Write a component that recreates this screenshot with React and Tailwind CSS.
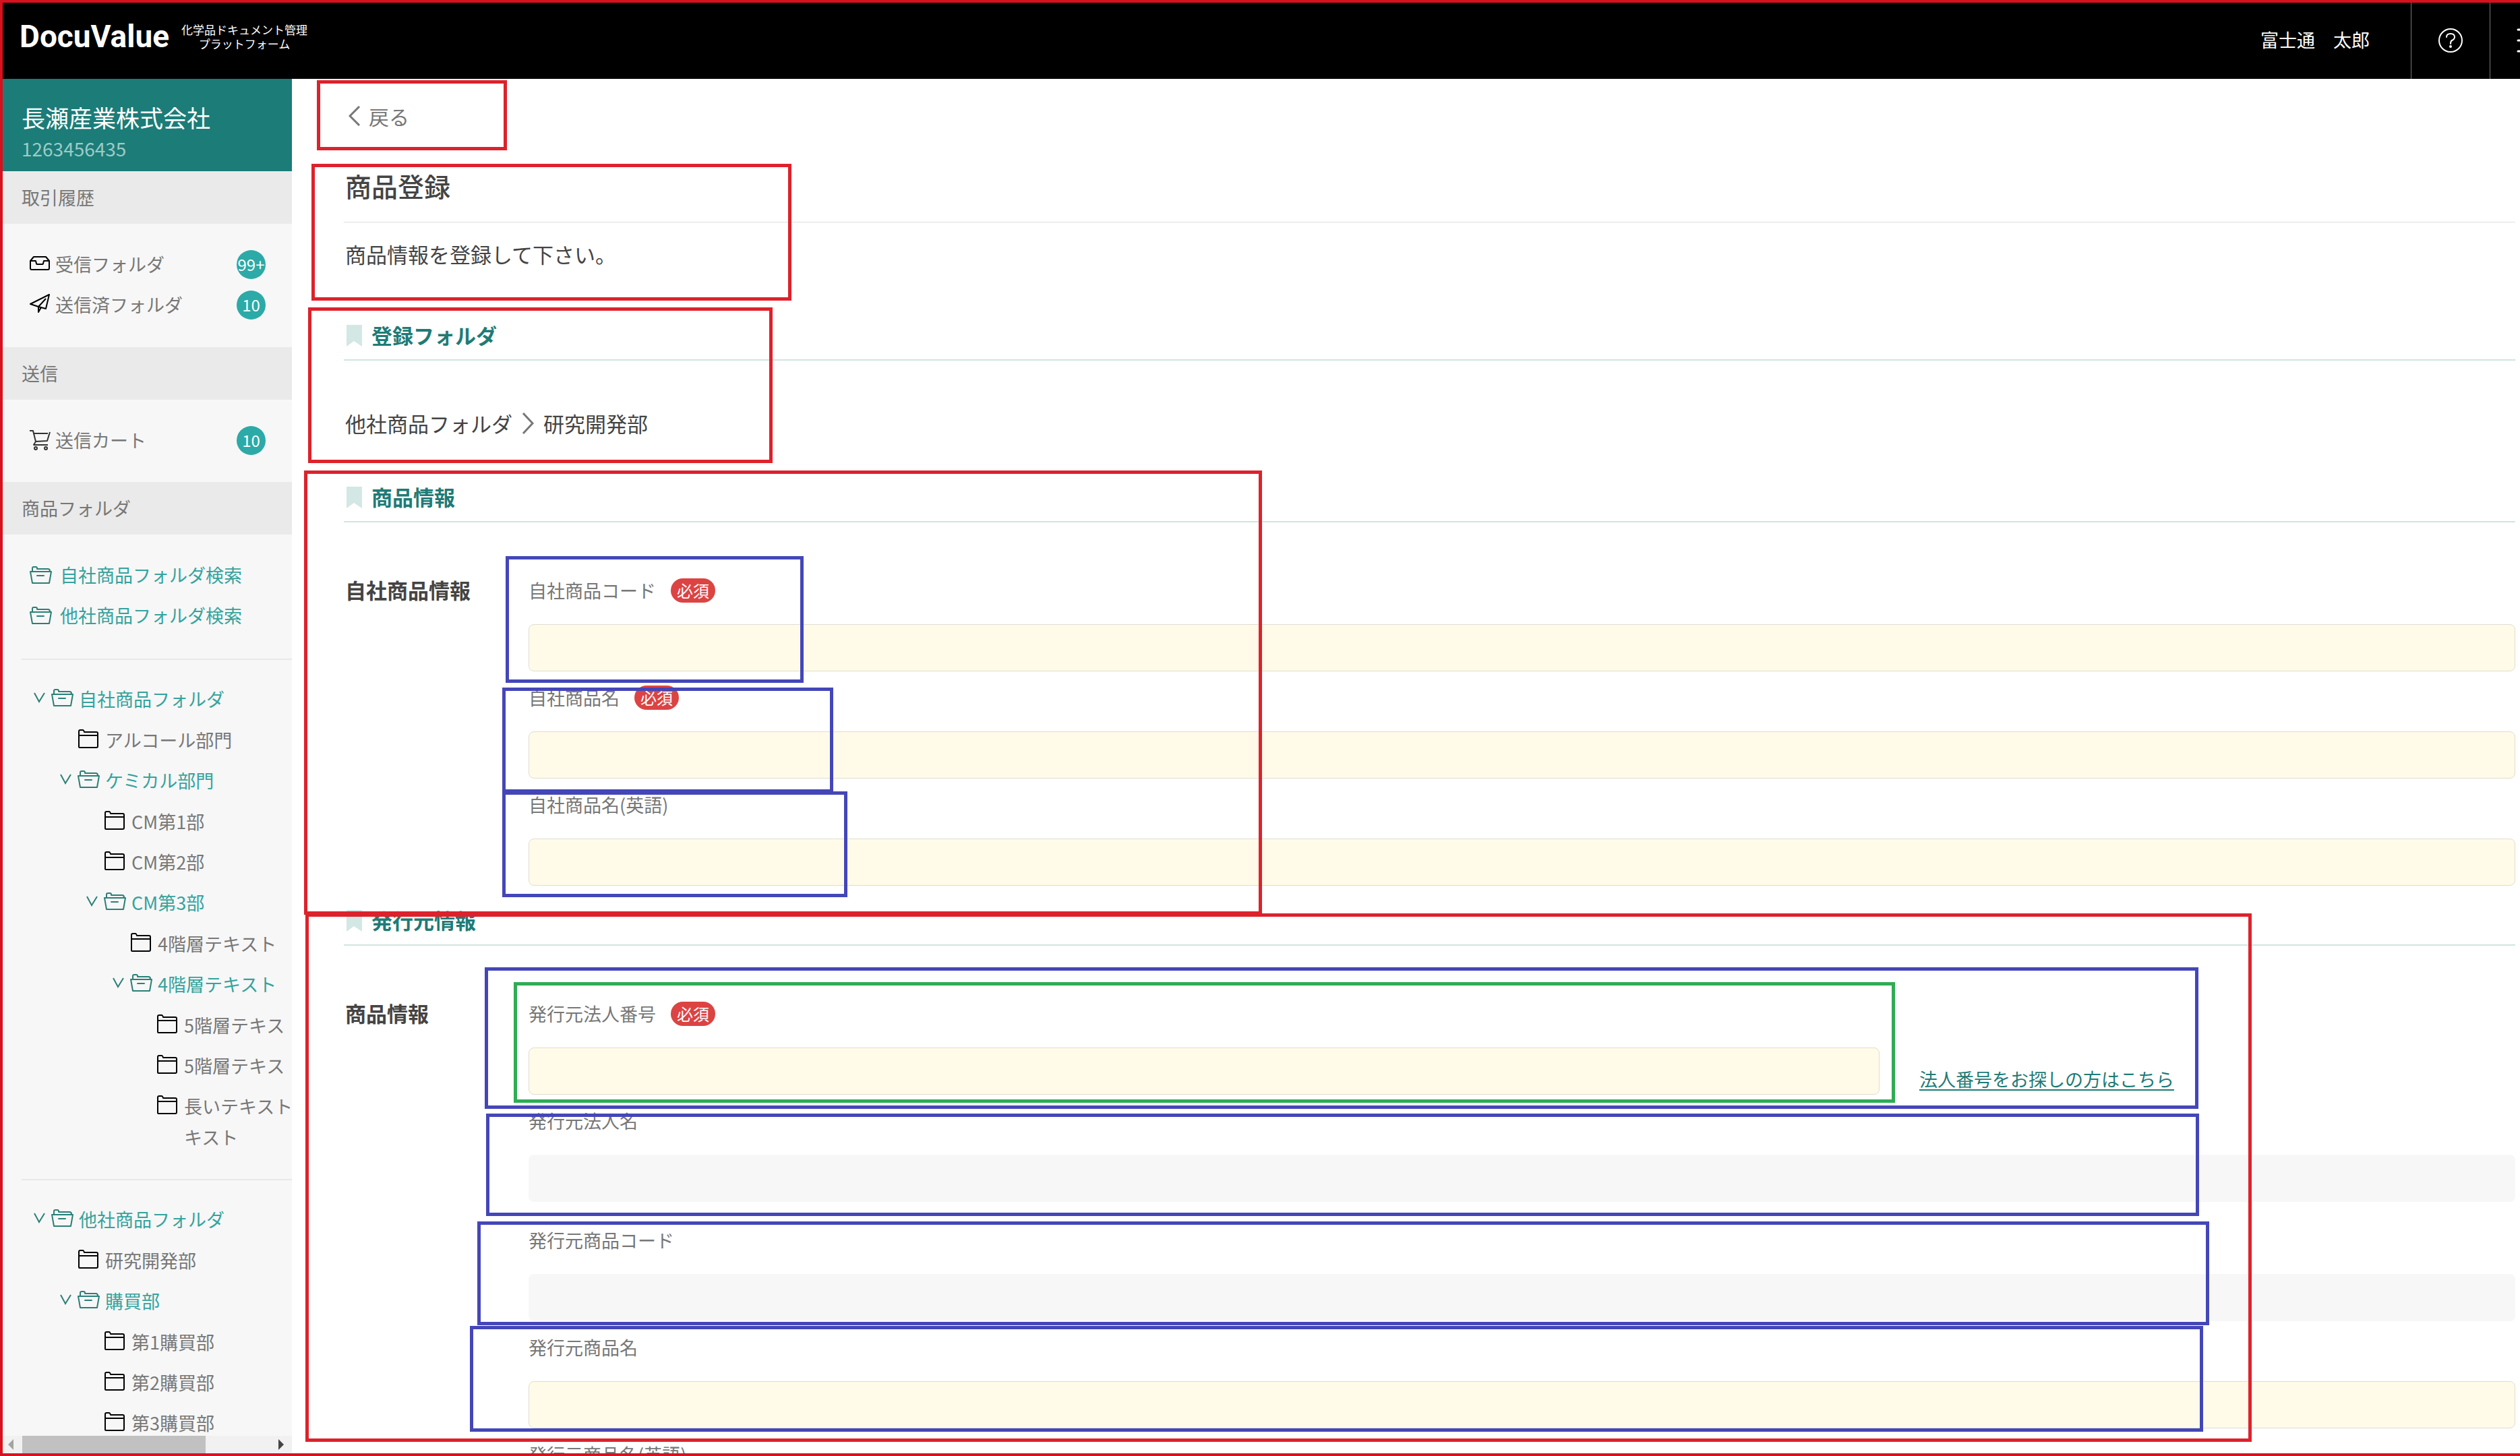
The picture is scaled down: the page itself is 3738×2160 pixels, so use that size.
import React from "react";

function OpenFolder() {
  return (
    <svg className="w-[33px] h-[29px] shrink-0" viewBox="0 0 33 29" fill="none" stroke="#2a8076" strokeWidth="2" strokeLinejoin="round" strokeLinecap="round" aria-hidden="true">
      <path d="M4 9 V4 Q4 2 6 2 H9 Q11 2 11 4 V5 H27 Q30 5 30 8 M1 9 H32 L29 26 H4 Z M11 15 H21" />
    </svg>
  );
}

function ClosedFolder() {
  return (
    <svg className="w-[30px] h-[29px] shrink-0" viewBox="0 0 30 29" fill="none" stroke="#000" strokeWidth="2" strokeLinejoin="round" aria-hidden="true">
      <path d="M1 26 V3 Q1 1 3 1 H7 Q8 1 9 4 H27 Q29 4 29 6 V25 Q29 27 27 27 H2 Q1 27 1 26 Z M1 9 H29" />
    </svg>
  );
}

function Inbox() {
  return (
    <svg className="w-[30px] h-[26px] shrink-0" viewBox="0 0 30 26" fill="none" stroke="#000" strokeWidth="2" strokeLinejoin="round" aria-hidden="true">
      <path d="M1 8 L6 2 H24 L29 8 V19 Q29 21 27 21 H3 Q1 21 1 19 Z M1 8 H9 L10 12 Q10 13 12 13 H18 Q20 13 20 12 L21 8 H29" />
    </svg>
  );
}

function Plane() {
  return (
    <svg className="w-[30px] h-[32px] shrink-0" viewBox="0 0 30 32" fill="none" stroke="#000" strokeWidth="2" strokeLinejoin="round" aria-hidden="true">
      <path d="M29 1 L1 15 L13 19 L24 22 Z M24 7 L13 19 V27 L17 20" />
    </svg>
  );
}

function Cart() {
  return (
    <svg className="w-[32px] h-[31px] shrink-0" viewBox="0 0 32 31" fill="none" stroke="#333" strokeWidth="2" strokeLinejoin="round" aria-hidden="true">
      <path d="M0 1 H5 L9 17 L26 16 L30 3 M6 5 H27 M9 17 L6 22 H27" />
      <circle cx="9" cy="27" r="2" />
      <circle cx="24" cy="27" r="2" />
    </svg>
  );
}

function Chevron({ className, d, box, color, width }) {
  return (
    <svg className={className} viewBox={box} fill="none" stroke={color} strokeWidth={width} aria-hidden="true">
      <path d={d} />
    </svg>
  );
}

function SectionBar({ children }) {
  return <h2 className="h-[78px] bg-[#eaeaea] pl-7 flex items-center text-[27px] leading-[46px] text-[#777]">{children}</h2>;
}

function NavItem({ icon, label, count }) {
  return (
    <li>
      <a href="#" className="flex h-[60px] items-center pl-10 pr-[39px]">
        <span className="w-[38px]">{icon}</span>
        <span className="flex-1 text-[#777]">{label}</span>
        <span className="flex size-[43px] items-center justify-center rounded-full bg-[#2baaa8] text-[24px] leading-none text-white">{count}</span>
      </a>
    </li>
  );
}

function SearchItem({ label }) {
  return (
    <li>
      <a href="#" className="flex h-[60px] items-center gap-3 pl-10 text-[#35a39d]">
        <OpenFolder />
        {label}
      </a>
    </li>
  );
}

const ownTree = {
  label: "自社商品フォルダ",
  children: [
    { label: "アルコール部門" },
    {
      label: "ケミカル部門",
      children: [
        { label: "CM第1部" },
        { label: "CM第2部" },
        {
          label: "CM第3部",
          children: [
            { label: "4階層テキスト" },
            {
              label: "4階層テキスト",
              children: [{ label: "5階層テキス" }, { label: "5階層テキス" }, { label: "長いテキスト", more: "キスト" }],
            },
          ],
        },
      ],
    },
  ],
};

const otherTree = {
  label: "他社商品フォルダ",
  children: [
    { label: "研究開発部" },
    { label: "購買部", children: [{ label: "第1購買部" }, { label: "第2購買部" }, { label: "第3購買部" }] },
  ],
};

function TreeNode({ node }) {
  const open = Boolean(node.children);
  return (
    <li>
      <button type="button" className="flex items-start py-[7px] text-left whitespace-nowrap">
        <span className="flex h-[42px] w-[26px] shrink-0 items-center">
          {open && <Chevron className="w-[17px] h-[16px]" box="0 0 17 16" d="M1 1 L8 14 L16 1" color="#2a8076" width="2" />}
        </span>
        <span className="flex h-[42px] w-[41px] shrink-0 items-center">
          {open ? <OpenFolder /> : <span className="pl-px"><ClosedFolder /></span>}
        </span>
        <span className={open ? "text-[#35a39d]" : "text-[#777]"}>
          {node.label}
          {node.more && <span className="block">{node.more}</span>}
        </span>
      </button>
      {open && (
        <ul className="mt-px pl-[39px]">
          {node.children.map((c, i) => <TreeNode key={i} node={c} />)}
        </ul>
      )}
    </li>
  );
}

function Sidebar() {
  return (
    <aside className="relative w-[429px] shrink-0 overflow-hidden bg-[#f7f7f7] text-[27px] leading-[46px]">
      <div className="h-[137px] bg-[#1c7c78] pl-7 pt-8">
        <p className="text-[35px] leading-[50px] text-white">長瀬産業株式会社</p>
        <p className="text-[28px] leading-[42px] text-[#9ccbc8]">1263456435</p>
      </div>
      <SectionBar>取引履歴</SectionBar>
      <ul className="pt-[30px] pb-[33px]">
        <NavItem icon={<Inbox />} label="受信フォルダ" count="99+" />
        <NavItem icon={<Plane />} label="送信済フォルダ" count="10" />
      </ul>
      <SectionBar>送信</SectionBar>
      <ul className="pt-[30px] pb-8">
        <NavItem icon={<Cart />} label="送信カート" count="10" />
      </ul>
      <SectionBar>商品フォルダ</SectionBar>
      <ul className="pt-[30px] pb-[34px]">
        <SearchItem label="自社商品フォルダ検索" />
        <SearchItem label="他社商品フォルダ検索" />
      </ul>
      <ul className="ml-7 border-t-2 border-[#e8e8e8] pt-[28px] pb-[32px] pl-[18px]">
        <TreeNode node={ownTree} />
      </ul>
      <ul className="ml-7 border-t-2 border-[#e8e8e8] pt-[28px] pl-[18px]">
        <TreeNode node={otherTree} />
      </ul>
      <div className="absolute inset-x-0 bottom-0 flex h-[26px] items-center justify-between bg-[#f1f1f1] px-2">
        <svg className="w-[8px] h-[16px]" viewBox="0 0 8 16" aria-hidden="true"><path d="M8 0 V16 L0 8 Z" fill="#a3a3a3" /></svg>
        <div className="ml-[13px] mr-auto h-full w-[272px] bg-[#c1c1c1]" />
        <svg className="mr-1 w-[8px] h-[16px]" viewBox="0 0 8 16" aria-hidden="true"><path d="M0 0 V16 L8 8 Z" fill="#444" /></svg>
      </div>
    </aside>
  );
}

function SectionTitle({ children }) {
  return (
    <h2 className="flex h-[60px] items-start gap-3.5 border-b-2 border-[#cfe5e1] pl-1 text-[31px] font-bold leading-[44px] text-[#1f7b76]">
      <svg className="mt-[7px] w-[23px] h-[32px] shrink-0" viewBox="0 0 23 32" aria-hidden="true"><path d="M0 0 H23 V32 L11 24 L0 32 Z" fill="#d3e7e5" /></svg>
      {children}
    </h2>
  );
}

function Field({ id, label, required, disabled, className = "" }) {
  return (
    <div className={className}>
      <div className="flex h-[44px] items-center gap-[22px]">
        <label htmlFor={id} className="text-[27px] leading-[44px] text-[#777]">{label}</label>
        {required && <span className="flex h-9 w-[66px] items-center justify-center rounded-[18px] bg-[#dc4343] text-[24px] leading-none text-white">必須</span>}
      </div>
      <input
        id={id}
        type="text"
        disabled={disabled}
        className={disabled ? "mt-7 block h-[70px] w-full rounded-lg bg-[#f7f7f7] px-4" : "mt-7 block h-[70px] w-full rounded-lg border border-[#e0ddd0] bg-[#fffbe8] px-4"}
      />
    </div>
  );
}

const frames = [
  "left-[470px] top-[119px] w-[282px] h-[104px] border-[#dd222c]",
  "left-[462px] top-[243px] w-[712px] h-[203px] border-[#dd222c]",
  "left-[457px] top-[456px] w-[689px] h-[231px] border-[#dd222c]",
  "left-[451px] top-[698px] w-[1421px] h-[659px] border-[#dd222c]",
  "left-[750px] top-[825px] w-[442px] h-[188px] border-[#4446b8]",
  "left-[745px] top-[1020px] w-[491px] h-[156px] border-[#4446b8]",
  "left-[745px] top-[1174px] w-[512px] h-[157px] border-[#4446b8]",
  "left-[453px] top-[1355px] w-[2887px] h-[784px] border-[#dd222c]",
  "left-[719px] top-[1435px] w-[2542px] h-[210px] border-[#4446b8]",
  "left-[762px] top-[1457px] w-[2049px] h-[179px] border-[#2fac54]",
  "left-[721px] top-[1652px] w-[2541px] h-[152px] border-[#4446b8]",
  "left-[708px] top-[1812px] w-[2569px] h-[154px] border-[#4446b8]",
  "left-[697px] top-[1967px] w-[2571px] h-[157px] border-[#4446b8]",
];

export default function App() {
  return (
    <div className="relative flex h-screen flex-col overflow-hidden border-y-4 border-l-4 border-[#d6121f] bg-white font-['Noto_Sans_CJK_JP','Noto_Sans',sans-serif] text-[#444]">
      <header className="flex h-[113px] shrink-0 items-stretch overflow-hidden bg-black text-white">
        <div className="flex h-[100px] items-center gap-[18px] pl-[25px]">
          <h1 className="font-[Roboto,sans-serif] text-[46px] font-bold leading-none">DocuValue</h1>
          <p className="text-center text-[17px] leading-[21px]">化学品ドキュメント管理<br />プラットフォーム</p>
        </div>
        <p className="ml-auto flex items-center pr-[61px] pb-0.5 text-[27px]">富士通　太郎</p>
        <button type="button" aria-label="ヘルプ" className="flex w-[117px] items-center justify-center border-l border-[#777] pb-0.5">
          <svg className="w-[36px] h-[38px]" viewBox="0 0 36 38" fill="none" stroke="#fff" strokeWidth="2" strokeLinecap="round" aria-hidden="true">
            <circle cx="18" cy="19" r="17" />
            <path d="M12 14 Q12 9 18 9 Q24 9 24 14 Q24 17 20 19 Q18 20 18 24" />
            <circle cx="18" cy="28" r="1" fill="#fff" />
          </svg>
        </button>
        <button type="button" aria-label="メニュー" className="flex w-[45px] items-center justify-end overflow-hidden border-l border-[#777] pb-0.5">
          <svg className="w-[5px] h-[38px]" viewBox="0 0 5 38" stroke="#fff" strokeWidth="3" strokeLinecap="round" aria-hidden="true">
            <path d="M2 3 H8 M2 19 H8 M2 35 H8" />
          </svg>
        </button>
      </header>
      <div className="flex min-h-0 flex-1">
        <Sidebar />
        <main className="min-w-0 flex-1 overflow-hidden pl-[77px] pr-[7px] pt-8">
          <a href="#" className="ml-[7px] flex h-[46px] w-fit items-center gap-3 text-[30px] leading-[46px] text-[#777]">
            <Chevron className="w-[18px] h-[30px]" box="0 0 18 30" d="M16 1 L2 15 L16 29" color="#777" width="3" />
            戻る
          </a>
          <h1 className="mt-[52px] h-[83px] border-b border-[#ddd] pl-0.5 text-[39px] font-medium leading-[56px]">商品登録</h1>
          <p className="mt-6 pl-0.5 text-[31px] leading-[46px]">商品情報を登録して下さい。</p>
          <section className="mt-[75px]">
            <SectionTitle>登録フォルダ</SectionTitle>
            <p className="mt-[70px] flex items-center gap-3.5 pl-0.5 text-[31px] leading-[46px]">
              他社商品フォルダ
              <Chevron className="w-[18px] h-[32px]" box="0 0 18 32" d="M2 1 L16 16 L2 31" color="#777" width="3" />
              研究開発部
            </p>
          </section>
          <section className="mt-16">
            <SectionTitle>商品情報</SectionTitle>
            <div className="mt-[79px] flex">
              <h3 className="w-[274px] shrink-0 pl-0.5 text-[31px] font-bold leading-[42px]">自社商品情報</h3>
              <div className="flex flex-1 flex-col gap-[17px]">
                <Field id="own-code" label="自社商品コード" required />
                <Field id="own-name" label="自社商品名" required />
                <Field id="own-name-en" label="自社商品名(英語)" />
              </div>
            </div>
          </section>
          <section className="mt-[29px]">
            <SectionTitle>発行元情報</SectionTitle>
            <div className="mt-[79px] flex">
              <h3 className="w-[274px] shrink-0 pl-0.5 text-[31px] font-bold leading-[42px]">商品情報</h3>
              <div className="flex flex-1 flex-col gap-[17px]">
                <div className="flex items-end">
                  <Field id="issuer-no" label="発行元法人番号" required className="w-[68%]" />
                  <a href="#" className="ml-[59px] text-[27px] leading-[46px] text-[#1f7b76] underline underline-offset-4">法人番号をお探しの方はこちら</a>
                </div>
                <Field id="issuer-name" label="発行元法人名" disabled className="mb-[18px]" />
                <Field id="issuer-code" label="発行元商品コード" disabled />
                <Field id="issuer-product" label="発行元商品名" />
                <Field id="issuer-product-en" label="発行元商品名(英語)" />
              </div>
            </div>
          </section>
        </main>
      </div>
      <div className="pointer-events-none absolute -left-1 -top-1" aria-hidden="true">
        <div className="absolute left-[1739px] top-0 flex h-1 w-[362px] border-b-2 border-[#a8202c]">
          <div className="w-[72px] bg-[#f77fb4]" />
          <div className="flex-1 bg-[#f0dede]" />
        </div>
        {frames.map((f) => <div key={f} className={"absolute border-5 " + f} />)}
      </div>
    </div>
  );
}
